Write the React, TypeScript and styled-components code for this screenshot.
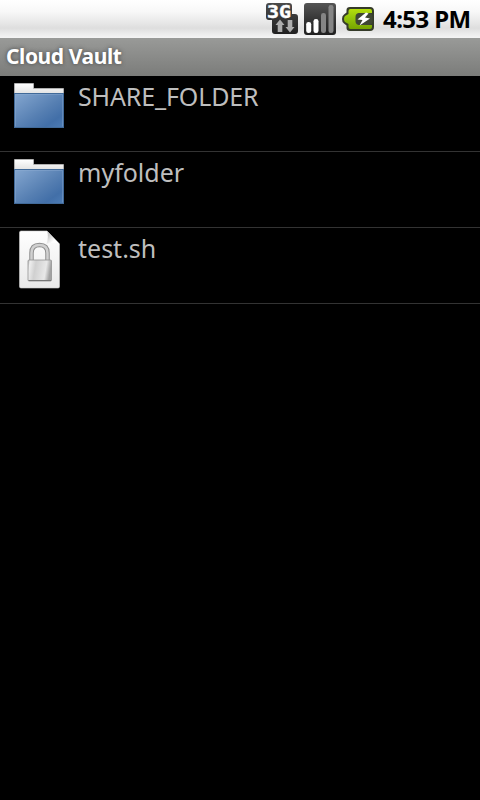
import React from 'react';
import styled, { createGlobalStyle } from 'styled-components';

const GlobalStyle = createGlobalStyle`
  * { box-sizing: border-box; }
  html, body { margin: 0; background: #000; }
  svg { display: block; flex: none; }
`;

const Screen = styled.main`
  width: 480px;
  height: 800px;
  display: flex;
  flex-direction: column;
  overflow: hidden;
  background: #000;
  font-family: 'Noto Sans', 'Open Sans', sans-serif;
`;

const StatusBar = styled.header`
  height: 38px;
  flex: none;
  display: flex;
  align-items: center;
  justify-content: flex-end;
  gap: 6px;
  padding-right: 10px;
  background: linear-gradient(#fff 0, #f8f8f8 30%, #e9e9e9 57%, #dedede 74%, #ebebeb 88%, #f4f4f4 100%);
`;

const Clock = styled.time`
  width: 87px;
  margin-left: 3px;
  color: #000;
  font-size: 24px;
  line-height: 38px;
  font-weight: 700;
  letter-spacing: -0.6px;
  white-space: nowrap;
`;

const TitleBar = styled.h1`
  height: 38px;
  flex: none;
  margin: 0;
  padding-left: 6px;
  color: #fff;
  font-size: 21px;
  line-height: 37px;
  font-weight: 700;
  letter-spacing: -0.42px;
  text-shadow: 0 0 4px #444;
  background: linear-gradient(#999a98, #7b7c7a);
`;

const FileList = styled.ul`
  margin: 0;
  padding: 0;
  list-style: none;
`;

const FileRow = styled.li`
  height: 76px;
  display: flex;
  border-bottom: 1px solid #333;
`;

const FileIcon = styled.span`
  width: 78px;
  flex: none;
`;

const FileName = styled.span<{ $spacing: number }>`
  color: #bebebe;
  font-size: 25px;
  line-height: 41px;
  letter-spacing: ${({ $spacing }) => $spacing}px;
`;

const NetworkIcon = () => (
  <svg width="32" height="34" viewBox="0 0 32 34">
    <defs>
      <linearGradient id="network" x2="0" y2="1">
        <stop stopColor="#4b4b4b" />
        <stop offset="1" stopColor="#202020" />
      </linearGradient>
    </defs>
    <path d="M3 1H23Q26 1 26 4V12H29Q32 12 32 15V29Q32 32 29 32H9Q6 32 6 29V18H3Q0 18 0 15V4Q0 1 3 1Z" fill="url(#network)" />
    <text x="1" y="15.500" fill="#fff" stroke="#fff" strokeWidth=".4" strokeLinejoin="miter" fontFamily="DejaVu Sans Mono" fontSize="17" fontWeight="700" textLength="24" lengthAdjust="spacingAndGlyphs">3G</text>
    <path d="M14 17.500L18.500 23H16.300V30H11.700V23H9.500ZM24 30.500L19.500 25H21.700V18H26.300V25H28.500Z" fill="#adadad" />
  </svg>
);

const SignalIcon = () => (
  <svg width="32" height="34" viewBox="0 0 32 34">
    <defs>
      <linearGradient id="signal" x2="0" y2="1">
        <stop stopColor="#555" />
        <stop offset=".55" stopColor="#333" />
        <stop offset="1" stopColor="#202020" />
      </linearGradient>
    </defs>
    <rect y="1" width="32" height="32" rx="3" fill="url(#signal)" />
    <rect x="2.2" y="20" width="5" height="11" rx="2.3" fill="#fff" />
    <rect x="9.5" y="17" width="5" height="14" rx="2.3" fill="#fff" />
    <rect x="17" y="11" width="5" height="20" rx="2.3" fill="#858585" />
    <rect x="24.5" y="3" width="5" height="28" rx="2.3" fill="#858585" />
  </svg>
);

const BatteryIcon = () => (
  <svg width="32" height="26" viewBox="0 0 32 26">
    <defs>
      <linearGradient id="charge" x2="0" y2="1">
        <stop stopColor="#b5df0d" />
        <stop offset=".45" stopColor="#94c40b" />
        <stop offset="1" stopColor="#76a500" />
      </linearGradient>
    </defs>
    <path d="M8 1H28Q32 1 32 5V21Q32 25 28 25H8Q4.500 25 4.500 22V19.500L2 17.500Q0 16.500 0 13Q0 9.500 2 8.500L4.500 6.500V4Q4.500 1 8 1Z" fill="#353b29" />
    <path d="M8.500 3H28Q30 3 30 5V7H19Q14 7 14 12V14Q14 19 19 19H30V21Q30 23 28 23H8.500Q6.500 23 6.500 21V18L3 16Q2 15 2 13Q2 11 3 10L6.500 8V5Q6.500 3 8.500 3Z" fill="url(#charge)" />
    <rect x="13.500" y="7" width="17" height="12" rx="4" fill="#3f4634" />
    <path d="M24 6.500L15.500 13.500L20.500 14L17.500 19.500L28 12.500L23 11.500L26.500 7.500Z" fill="#fff" />
  </svg>
);

const FolderIcon = () => (
  <svg width="78" height="75" viewBox="0 0 78 75">
    <defs>
      <linearGradient id="folder" x2="1" y2="1">
        <stop stopColor="#85a7d0" />
        <stop offset=".55" stopColor="#567fb2" />
        <stop offset=".8" stopColor="#426fa8" />
        <stop offset="1" stopColor="#4d7cb5" />
      </linearGradient>
      <linearGradient id="paper" x2="0" y2="1">
        <stop stopColor="#fff" />
        <stop offset="1" stopColor="#e1e1e1" />
      </linearGradient>
    </defs>
    <path d="M14.500 18V7.500H33.500V12.500H63.500V18Z" fill="url(#paper)" stroke="#c5c5c5" strokeWidth=".7" />
    <rect x="14.500" y="17.500" width="49" height="34" fill="url(#folder)" stroke="#416a99" />
    <path d="M15.500 50.500V18.500H62.500V50.500" fill="none" stroke="#91b0d5" strokeOpacity=".4" />
  </svg>
);

const LockedFileIcon = () => (
  <svg width="78" height="75" viewBox="0 0 78 75">
    <defs>
      <linearGradient id="sheet" x2="0" y2="1">
        <stop stopColor="#fff" />
        <stop offset="1" stopColor="#e9e9e9" />
      </linearGradient>
      <linearGradient id="lock" x2="1" y2=".15">
        <stop stopColor="#b5b5b5" />
        <stop offset=".1" stopColor="#eee" />
        <stop offset=".35" stopColor="#d0d0d0" />
        <stop offset=".8" stopColor="#e8e8e8" />
        <stop offset="1" stopColor="#a2a2a2" />
      </linearGradient>
      <linearGradient id="fold" x2="1" y2="1">
        <stop offset=".25" stopColor="#c9c9c9" />
        <stop offset=".65" stopColor="#fff" />
      </linearGradient>
    </defs>
    <path d="M21 3H47L59.500 16V58.500Q59.500 60 58 60H21Q19.500 60 19.500 58.500V4.500Q19.500 3 21 3Z" fill="url(#sheet)" stroke="#ccc" strokeWidth=".6" />
    <path d="M47 3Q49 9 46.500 16Q53 13.500 59.500 16Z" fill="url(#fold)" />
    <path d="M31.500 33V25Q31.500 17 39.500 17Q47.500 17 47.500 25V33" fill="none" stroke="#8e8e8e" strokeWidth="4.500" />
    <path d="M31.500 33V25Q31.500 17 39.500 17Q47.500 17 47.500 25V33" fill="none" stroke="#d0d0d0" strokeWidth="2.500" />
    <rect x="28" y="32" width="23.500" height="21" rx="1" fill="url(#lock)" stroke="#939393" strokeWidth=".8" />
    <path d="M28.500 52.500H51" stroke="#777" />
  </svg>
);

const files = [
  { name: 'SHARE_FOLDER', kind: 'folder', spacing: -0.13 },
  { name: 'myfolder', kind: 'folder', spacing: 0 },
  { name: 'test.sh', kind: 'locked', spacing: 0 },
];

export default function App() {
  return (
    <>
      <GlobalStyle />
      <Screen>
        <StatusBar>
          <NetworkIcon />
          <SignalIcon />
          <BatteryIcon />
          <Clock>4:53 PM</Clock>
        </StatusBar>
        <TitleBar>Cloud Vault</TitleBar>
        <FileList>
          {files.map(({ name, kind, spacing }) => (
            <FileRow key={name}>
              <FileIcon>{kind === 'folder' ? <FolderIcon /> : <LockedFileIcon />}</FileIcon>
              <FileName $spacing={spacing}>{name}</FileName>
            </FileRow>
          ))}
        </FileList>
      </Screen>
    </>
  );
}
